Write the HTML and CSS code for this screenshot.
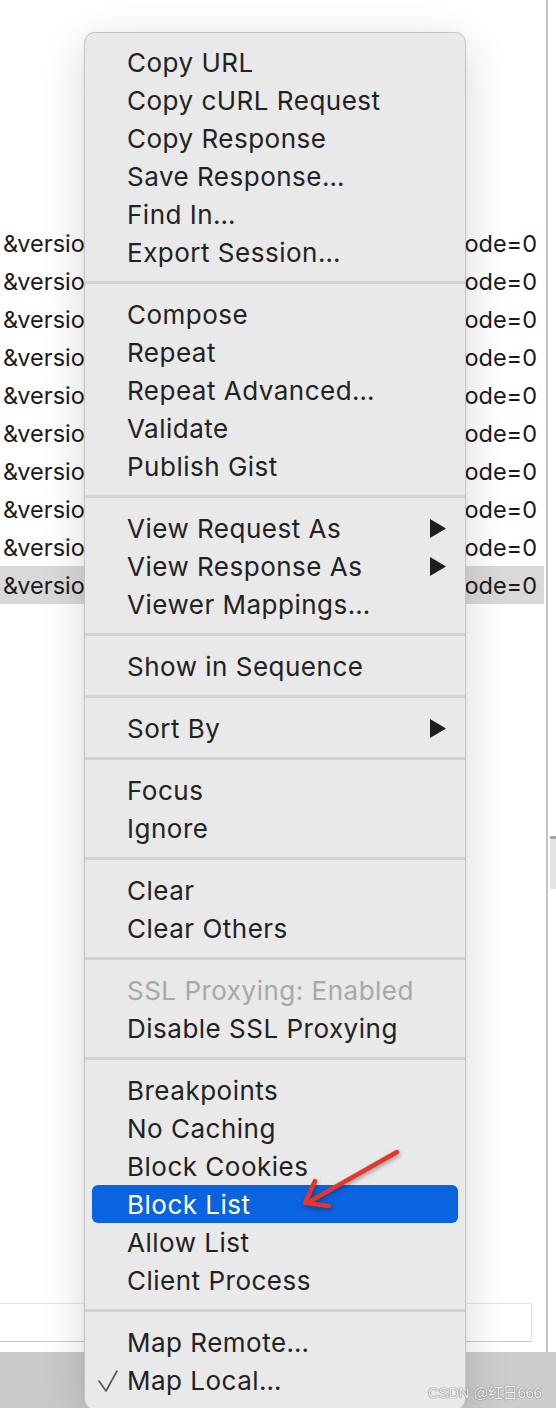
FILE: index.html
```html
<!DOCTYPE html>
<html lang="en">
<head>
<meta charset="utf-8">
<title>Context menu</title>
<link rel="stylesheet" href="styles.css">
</head>
<body>
<div class="window">
  <div class="upper">
    <div class="main">
      <div class="rows">
        <div class="row"><span class="cell-left">&amp;version</span><span class="cell-right">code=0</span></div>
        <div class="row"><span class="cell-left">&amp;version</span><span class="cell-right">code=0</span></div>
        <div class="row"><span class="cell-left">&amp;version</span><span class="cell-right">code=0</span></div>
        <div class="row"><span class="cell-left">&amp;version</span><span class="cell-right">code=0</span></div>
        <div class="row"><span class="cell-left">&amp;version</span><span class="cell-right">code=0</span></div>
        <div class="row"><span class="cell-left">&amp;version</span><span class="cell-right">code=0</span></div>
        <div class="row"><span class="cell-left">&amp;version</span><span class="cell-right">code=0</span></div>
        <div class="row"><span class="cell-left">&amp;version</span><span class="cell-right">code=0</span></div>
        <div class="row"><span class="cell-left">&amp;version</span><span class="cell-right">code=0</span></div>
        <div class="row row-selected"><span class="cell-left">&amp;version</span><span class="cell-right">code=0</span></div>
      </div>
      <div class="input-box"></div>
    </div>
    <div class="divider"></div>
    <div class="side"><div class="side-block"></div></div>
  </div>
  <div class="statusbar"></div>

  <div class="menu">
    <div class="group">
      <div class="item"><span class="check"></span><span class="label">Copy URL</span></div>
      <div class="item"><span class="check"></span><span class="label">Copy cURL Request</span></div>
      <div class="item"><span class="check"></span><span class="label">Copy Response</span></div>
      <div class="item"><span class="check"></span><span class="label">Save Response…</span></div>
      <div class="item"><span class="check"></span><span class="label">Find In…</span></div>
      <div class="item"><span class="check"></span><span class="label">Export Session…</span></div>
    </div>
    <div class="sep"></div>
    <div class="group">
      <div class="item"><span class="check"></span><span class="label">Compose</span></div>
      <div class="item"><span class="check"></span><span class="label">Repeat</span></div>
      <div class="item"><span class="check"></span><span class="label">Repeat Advanced…</span></div>
      <div class="item"><span class="check"></span><span class="label">Validate</span></div>
      <div class="item"><span class="check"></span><span class="label">Publish Gist</span></div>
    </div>
    <div class="sep"></div>
    <div class="group">
      <div class="item"><span class="check"></span><span class="label">View Request As</span><svg class="submenu" viewBox="0 0 16 19"><polygon points="0,0 16,9.5 0,19"/></svg></div>
      <div class="item"><span class="check"></span><span class="label">View Response As</span><svg class="submenu" viewBox="0 0 16 19"><polygon points="0,0 16,9.5 0,19"/></svg></div>
      <div class="item"><span class="check"></span><span class="label">Viewer Mappings…</span></div>
    </div>
    <div class="sep"></div>
    <div class="group">
      <div class="item"><span class="check"></span><span class="label">Show in Sequence</span></div>
    </div>
    <div class="sep"></div>
    <div class="group">
      <div class="item"><span class="check"></span><span class="label">Sort By</span><svg class="submenu" viewBox="0 0 16 19"><polygon points="0,0 16,9.5 0,19"/></svg></div>
    </div>
    <div class="sep"></div>
    <div class="group">
      <div class="item"><span class="check"></span><span class="label">Focus</span></div>
      <div class="item"><span class="check"></span><span class="label">Ignore</span></div>
    </div>
    <div class="sep"></div>
    <div class="group">
      <div class="item"><span class="check"></span><span class="label">Clear</span></div>
      <div class="item"><span class="check"></span><span class="label">Clear Others</span></div>
    </div>
    <div class="sep"></div>
    <div class="group">
      <div class="item item-disabled"><span class="check"></span><span class="label">SSL Proxying: Enabled</span></div>
      <div class="item"><span class="check"></span><span class="label">Disable SSL Proxying</span></div>
    </div>
    <div class="sep"></div>
    <div class="group">
      <div class="item"><span class="check"></span><span class="label">Breakpoints</span></div>
      <div class="item"><span class="check"></span><span class="label">No Caching</span></div>
      <div class="item"><span class="check"></span><span class="label">Block Cookies</span></div>
      <div class="item item-active"><span class="check"></span><span class="label">Block List</span></div>
      <div class="item"><span class="check"></span><span class="label">Allow List</span></div>
      <div class="item"><span class="check"></span><span class="label">Client Process</span></div>
    </div>
    <div class="sep"></div>
    <div class="group">
      <div class="item"><span class="check"></span><span class="label">Map Remote…</span></div>
      <div class="item"><span class="check"><svg viewBox="0 0 20 22"><polyline points="1,11 8,21 19,1"/></svg></span><span class="label">Map Local…</span></div>
    </div>
  </div>

  <svg class="annot-arrow" viewBox="0 0 120 80">
    <path d="M102,12 L12,63"/>
    <path d="M20,41 L10,63 L34,66"/>
  </svg>

  <div class="watermark">CSDN @红日666</div>
</div>
</body>
</html>
```

FILE: styles.css
```css
* { box-sizing: border-box; }

html, body {
  margin: 0;
  padding: 0;
  background: #ffffff;
}

body {
  width: 556px;
  height: 1408px;
  overflow: hidden;
}

.window {
  position: relative;
  width: 556px;
  height: 1408px;
  display: flex;
  flex-direction: column;
  overflow: hidden;
  font-family: Inter, "Noto Sans", sans-serif;
}

.upper {
  height: 1352px;
  display: flex;
}

.main {
  width: 546px;
  display: flex;
  flex-direction: column;
  padding-top: 224px;
  padding-bottom: 10px;
}

.rows {
  display: flex;
  flex-direction: column;
}

.row {
  height: 38px;
  margin-right: 2px;
  padding: 1px 7px 0 3px;
  display: flex;
  justify-content: space-between;
  align-items: center;
  font-family: Inter, "Liberation Sans", sans-serif;
  font-size: 23.5px;
  color: #1a1a1a;
  white-space: nowrap;
}

.row-selected {
  background: #d9d9d9;
}

.input-box {
  margin-top: auto;
  width: 532px;
  height: 39px;
  border-top: 1px solid #e6e6e6;
  border-right: 1px solid #e0e0e0;
  border-bottom: 1px solid #c9c9c9;
}

.divider {
  width: 2px;
  background: #c2c2c2;
}

.side {
  flex: 1;
  padding-top: 836px;
}

.side-block {
  height: 53px;
  background: #e3e3e3;
  border-top: 3px solid #a6a6a6;
  margin-left: 2px;
}

.statusbar {
  flex: 1;
  background: linear-gradient(90deg, #c9c9c9, #cdcdcd);
}

/* context menu (overlay) */
.menu {
  position: absolute;
  left: 84px;
  top: 32px;
  width: 382px;
  padding: 10px 0;
  background: #e8e9e8;
  border: 1px solid #c5c5c5;
  border-radius: 11px;
  box-shadow: 0 12px 44px rgba(0, 0, 0, 0.16), 0 0 2px rgba(0, 0, 0, 0.08);
  font-family: Inter, "Noto Sans", sans-serif;
  font-size: 26px;
  letter-spacing: 0.5px;
  color: #222222;
}

.group {
  display: flex;
  flex-direction: column;
}

.item {
  height: 38px;
  margin: 0 7px;
  padding-top: 1px;
  padding-right: 12px;
  display: grid;
  grid-template-columns: 35px 1fr auto;
  align-items: center;
  border-radius: 6px;
  white-space: nowrap;
}

.label {
  line-height: 30px;
}

.item-disabled {
  color: #a8a8a8;
}

.item-active {
  background: #0a64e0;
  color: #ffffff;
}

.check {
  display: flex;
  align-items: center;
  padding-left: 6px;
}

.check svg {
  width: 20px;
  height: 22px;
  fill: none;
  stroke: #555555;
  stroke-width: 1.6;
  stroke-linecap: round;
  stroke-linejoin: round;
}

.submenu {
  width: 16px;
  height: 19px;
  fill: #1e1e1e;
}

.sep {
  height: 3px;
  margin: 10px 0 11px;
  background: #d1d2d1;
}

/* red annotation arrow (overlay) */
.annot-arrow {
  position: absolute;
  left: 295px;
  top: 1140px;
  width: 120px;
  height: 80px;
  fill: none;
  stroke: #e3372b;
  stroke-width: 4.5;
  stroke-linecap: round;
  stroke-linejoin: round;
  filter: drop-shadow(1px 2px 2px rgba(0, 0, 0, 0.35));
}

.watermark {
  position: absolute;
  left: 428px;
  top: 1381px;
  font-family: "Liberation Sans", "Noto Sans CJK SC", sans-serif;
  font-size: 15px;
  color: #f4f4f4;
  text-shadow: 0 0 1px #6a6a6a, 0 0 1px #6a6a6a;
  letter-spacing: -0.3px;
}
```
